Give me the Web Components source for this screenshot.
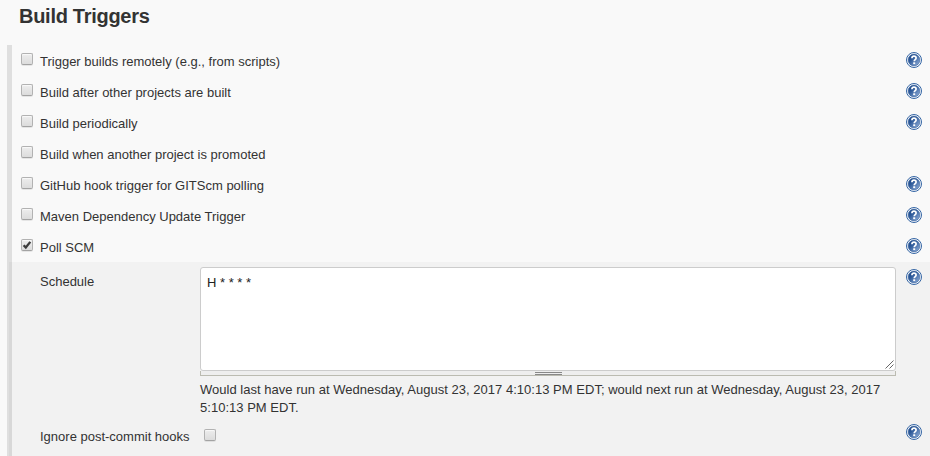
<!DOCTYPE html>
<html lang="en">
<head>
<meta charset="utf-8">
<title>Build Triggers</title>
<style>
body{margin:0;background:#f9f9f9;color:#333;font:13px/18px "Liberation Sans",Arial,sans-serif}
</style>
</head>
<body>
<build-triggers></build-triggers>
<script>
const define = (name, html, setup) => {
  const t = document.createElement('template');
  t.innerHTML = html;
  customElements.define(name, class extends HTMLElement {
    constructor() {
      super();
      this.attachShadow({mode: 'open'}).append(t.content.cloneNode(true));
      if (setup) setup(this);
    }
  });
};

define('help-icon', `<style>:host{display:block;width:16px;height:16px}svg{display:block}</style>
<svg width="16" height="16" viewBox="0 0 16 16">
<defs><linearGradient id="g" x1="0" y1="0" x2="1" y2="1"><stop offset="0" stop-color="#204a87"/><stop offset=".35" stop-color="#2b5797"/><stop offset="1" stop-color="#9ab6de"/></linearGradient></defs>
<circle cx="8" cy="8" r="7.500" fill="#fff" stroke="#3465a4" stroke-width="1"/>
<circle cx="8" cy="8" r="5.900" fill="url(#g)" stroke="#3a64a0" stroke-width=".6"/>
<path d="M5.900 6.200C6 4.700 6.800 4.200 8 4.200c1.300 0 2.100.6 2.100 1.700C10.100 7.500 8.200 7.600 8.200 9.300" fill="none" stroke="#fff" stroke-width="1.700"/>
<rect x="7.200" y="10.300" width="2" height="1.800" fill="#fff"/></svg>`);

define('check-box', `<style>
:host{display:block;box-sizing:border-box;width:12px;height:12px;border:1px solid #b2b2b2;border-bottom-color:#a3a3a3;border-radius:2px;background:linear-gradient(#ededed,#dcdcdc);box-shadow:0 1px 0 rgba(0,0,0,.08),inset 0 1px 1px rgba(255,255,255,.7)}
svg{display:none}:host([checked]) svg{display:block}</style>
<svg width="10" height="10" viewBox="0 0 10 10"><path d="M1.600 5.200 3.800 7.500 8.300 1.900" fill="none" stroke="#3c3c3c" stroke-width="2.300"/></svg>`);

define('trigger-row', `<style>
:host{display:flex;height:31px;box-sizing:border-box;padding:7px 8px 0 9px}
check-box{margin:1px 7px 0 0}span{flex:1;padding-top:1px;white-space:nowrap}
:host([nohelp]) help-icon{display:none}</style>
<check-box></check-box><span><slot></slot></span><help-icon></help-icon>`);

define('schedule-field', `<style>
:host{display:block;width:696px}
.area{box-sizing:border-box;height:104px;border:1px solid #ccc;border-radius:3px;background:#fff;color:#222;padding:6px;position:relative}
.grip{position:absolute;right:1px;bottom:1px}
.bar{box-sizing:border-box;height:5px;border:1px solid #bbbbb1;border-top:0;background:#eee;display:flex;justify-content:center;align-items:center}
.bar i{box-sizing:border-box;width:27px;height:3px;border:solid #888;border-width:1px 0}</style>
<div class="area"><slot></slot><svg class="grip" width="9" height="9" viewBox="0 0 9 9"><path d="M.5 8.500 8.500.5M4.500 8.500 8.500 4.500" stroke="#666" stroke-width="1"/></svg></div>
<div class="bar"><i></i></div>`);

define('trigger-settings', `<style>
:host{display:grid;grid-template-columns:160px 696px 26px;grid-template-rows:149px 1fr;row-gap:6px;box-sizing:border-box;height:194px;padding:5px 8px 0 28px;background:#f2f2f2}
.label{padding-top:6px;white-space:nowrap}help-icon{margin:2px 0 0 10px}
.message{padding-top:5px;letter-spacing:.02px}
check-box{margin:7px 0 0 4px}</style>
<div class="label">Schedule</div>
<div><schedule-field>H * * * *</schedule-field><div class="message">Would last have run at Wednesday, August 23, 2017 4:10:13 PM EDT; would next run at Wednesday, August 23, 2017<br>5:10:13 PM EDT.</div></div>
<help-icon></help-icon>
<div class="label">Ignore post-commit hooks</div><check-box></check-box><help-icon></help-icon>`);

define('build-triggers', `<style>
:host{display:block;height:456px;overflow:hidden}
h2{margin:0;padding:4px 0 0 19px;height:41px;font-size:20px;line-height:24px;font-weight:bold;letter-spacing:-.28px}
section{margin-left:7px;height:411px;border-left:5px solid #dfdfdf}
trigger-settings{margin-left:-3px;border-left:3px solid #d8d8d8}</style>
<h2>Build Triggers</h2>
<section>
<trigger-row>Trigger builds remotely (e.g., from scripts)</trigger-row>
<trigger-row>Build after other projects are built</trigger-row>
<trigger-row>Build periodically</trigger-row>
<trigger-row nohelp>Build when another project is promoted</trigger-row>
<trigger-row>GitHub hook trigger for GITScm polling</trigger-row>
<trigger-row>Maven Dependency Update Trigger</trigger-row>
<trigger-row id="poll">Poll SCM</trigger-row>
<trigger-settings></trigger-settings>
</section>`, host => {
  host.shadowRoot.getElementById('poll').shadowRoot.querySelector('check-box').setAttribute('checked', '');
});
</script>
</body>
</html>
